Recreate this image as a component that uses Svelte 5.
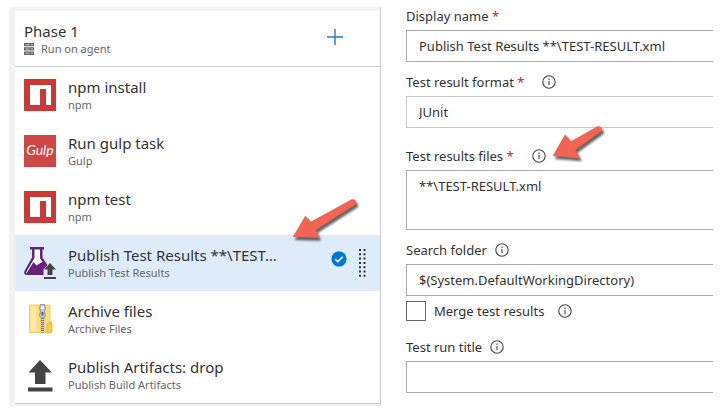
<script>
  let selected = $state(3);
  let displayName = $state('Publish Test Results **\\TEST-RESULT.xml');
  let format = $state('JUnit');
  let files = $state('**\\TEST-RESULT.xml');
  let folder = $state('$(System.DefaultWorkingDirectory)');
  let merge = $state(false);
  let runTitle = $state('');

  const tasks = [
    { icon: 'npm', title: 'npm install', kind: 'npm' },
    { icon: 'gulp', title: 'Run gulp task', kind: 'Gulp' },
    { icon: 'npm', title: 'npm test', kind: 'npm' },
    { icon: 'flask', title: 'Publish Test Results **\\TEST…', kind: 'Publish Test Results' },
    { icon: 'zip', title: 'Archive files', kind: 'Archive Files' },
    { icon: 'upload', title: 'Publish Artifacts: drop', kind: 'Publish Build Artifacts' }
  ];
</script>

{#snippet info()}
  <button class="info" type="button" aria-label="More information">
    <svg viewBox="0 0 14 14" width="14" height="14">
      <circle cx="7" cy="7" r="6.200" fill="none" stroke="#444" stroke-width="1.1" />
      <path d="M7 6v4.200M7 3.600v1.300" stroke="#444" stroke-width="1.100" />
    </svg>
  </button>
{/snippet}

{#snippet taskIcon(name)}
  {#if name === 'npm'}
    <svg viewBox="0 0 32 32" width="32" height="32" aria-hidden="true">
      <path fill="#cb3837" d="M0 0h32v32H0z" />
      <path fill="#fff" d="M6 6h21v20h-5V10h-6v16H6z" />
    </svg>
  {:else if name === 'gulp'}
    <span class="gulp" aria-hidden="true">Gulp</span>
  {:else if name === 'flask'}
    <svg viewBox="0 0 32 32" width="32" height="32" aria-hidden="true">
      <path fill="#68217a" d="M6 0h14v2.500h-1.500v8L28 25q1.500 3-2 3H3.500q-4.500 0-3-4L8 10.500v-8H6z" />
      <path fill="#fff" d="M10.500 2.500H16v8.500l2.500 4-3 1.500-3 2-3-3.500-6.500 10.500q-.5 1-1 .5.200-.8 1-2.300L10.500 11z" />
      <path fill="#deecf9" d="M19.500 22.500 26 15l7 7.500v11H19.500z" />
      <path fill="#444" d="m26 16 6 6.500h-3.500V28h-5v-5.500H20zM20 30h12v2H20z" />
    </svg>
  {:else if name === 'zip'}
    <svg viewBox="0 0 32 32" width="32" height="32" aria-hidden="true">
      <path fill="#fbdf7d" stroke="#e9c65a" stroke-width=".8" d="M5.500 2H26v27.500H5.500z" />
      <path fill="#ffeba6" d="M7 3.500h5v25H7z" />
      <path fill="#f5cd4e" stroke="#deb63c" stroke-width=".7" d="M23 29.500V21l3-2.500 2 1v10z" />
      <path fill="#e6d089" d="M16 2h5v27.500h-5z" />
      <path stroke="#777" stroke-width="3" stroke-dasharray="1 1" d="M18.500 13v16.500" />
      <path fill="#c4c7cc" stroke="#888" stroke-width=".8" d="M16.500 1.500h4l1 4-1 2.500 1 5-2 2h-2l-2-2 1-5-1-2.500z" />
      <path fill="#fff" d="M17.500 3h2v3h-2z" />
      <path fill="#666" d="M17.500 9h2v3.500h-2z" />
    </svg>
  {:else}
    <svg viewBox="0 0 32 32" width="32" height="32" aria-hidden="true">
      <path fill="#444" d="m16 1 12 12.500h-6.500V25H11V13.500H4.500zM4 28.500h24.500v4H4z" />
    </svg>
  {/if}
{/snippet}

<main class="editor">
  <section class="phases">
    <header class="phase">
      <div class="phase-text">
        <h1>Phase 1</h1>
        <p>
          <svg viewBox="0 0 10 12" width="10" height="12" aria-hidden="true">
            <path fill="#666" d="M0 0h10v3.300H0zM0 4.300h10v3.300H0zM0 8.600h10v3.300H0z" />
            <path stroke="#ddd" stroke-width=".8" d="M1.500 1.700h4M7 1.700h2M1.500 6h4M7 6h2M1.500 10.300h4M7 10.300h2" />
          </svg>
          Run on agent
        </p>
      </div>
      <button class="add" type="button" aria-label="Add task">
        <svg viewBox="0 0 16 16" width="16" height="16">
          <path d="M8 0v16M0 8h16" stroke="#2b78c6" stroke-width="1.400" />
        </svg>
      </button>
    </header>

    <ul class="tasks">
      {#each tasks as task, i}
        <li>
          <button class="task" class:selected={selected === i} type="button" onclick={() => (selected = i)}>
            {@render taskIcon(task.icon)}
            <span class="task-text">
              <span class="title">{task.title}</span>
              <span class="kind">{task.kind}</span>
            </span>
            {#if selected === i}
              <span class="tools">
                <svg viewBox="0 0 18 18" width="18" height="18" aria-hidden="true">
                  <circle cx="9" cy="9" r="8.500" fill="#fff" />
                  <circle cx="9" cy="9" r="7.700" fill="#0078d7" />
                  <path d="m5.300 9.200 2.500 2.500 4.900-5" fill="none" stroke="#fff" stroke-width="1.600" />
                </svg>
                <svg viewBox="0 0 8 30" width="8" height="30" aria-hidden="true">
                  <path d="M2 1v29M6.500 1v29" stroke="#333" stroke-width="2" stroke-dasharray="2 2.300" />
                </svg>
              </span>
            {/if}
          </button>
        </li>
      {/each}
    </ul>
  </section>

  <form class="details">
    <div class="field">
      <div class="label"><label for="name">Display name <b>*</b></label></div>
      <input id="name" type="text" bind:value={displayName} />
    </div>
    <div class="field">
      <div class="label wide"><label for="format">Test result format <b>*</b></label>{@render info()}</div>
      <select id="format" bind:value={format}>
        <option>JUnit</option>
        <option>NUnit</option>
        <option>VSTest</option>
        <option>XUnit</option>
      </select>
    </div>
    <div class="field spaced">
      <div class="label wide"><label for="files">Test results files <b>*</b></label>{@render info()}</div>
      <textarea id="files" bind:value={files}></textarea>
    </div>
    <div class="field">
      <div class="label"><label for="folder">Search folder</label>{@render info()}</div>
      <input id="folder" type="text" bind:value={folder} />
    </div>
    <div class="merge">
      <input id="merge" type="checkbox" bind:checked={merge} />
      <label for="merge">Merge test results</label>
      {@render info()}
    </div>
    <div class="field">
      <div class="label"><label for="title">Test run title</label>{@render info()}</div>
      <input id="title" type="text" bind:value={runTitle} />
    </div>
  </form>

  <svg class="arrow to-task" viewBox="0 0 72 48" width="72" height="48" aria-hidden="true">
    <path d="M2.700 39 15.300 17.700l5.400 6L61.700 1.200q4.500-.5 4.600 3.400-.1 1.500-1.600 2.500L25.700 32l3.300 7.700z" />
  </svg>
  <svg class="arrow to-field" viewBox="0 0 60 40" width="60" height="40" aria-hidden="true">
    <path d="M2.700 30 15 8.300l6 7L47.500.3q4-.5 4.600 3-.1 1.500-1.600 2.500L25.300 24l4.700 8.300z" />
  </svg>
</main>

<style>
  :global(body) {
    background: #fff;
  }

  .editor {
    position: relative;
    display: flex;
    align-items: stretch;
    gap: 25px;
    padding: 7px 9px 6px;
    font-family: "Noto Sans", "Open Sans", sans-serif;
    font-size: 13px;
    line-height: 20px;
    color: #333;
  }

  button {
    padding: 0;
    border: 0;
    background: none;
    font: inherit;
    color: inherit;
    text-align: left;
    cursor: pointer;
  }

  svg {
    display: block;
    flex: none;
    overflow: visible;
  }

  .phases {
    flex: 0 0 372px;
    box-sizing: border-box;
    padding: 4px 0 2px 6px;
    border-right: 1px solid #ccc;
    background: #f2f2f2;
  }

  .phase {
    display: flex;
    align-items: center;
    justify-content: space-between;
    box-sizing: border-box;
    height: 56px;
    padding: 0 37px 0 9px;
    border-bottom: 1px solid #ccc;
    background: #fff;
  }

  h1,
  p {
    margin: 0;
  }

  h1 {
    font-size: 15px;
    font-weight: 400;
    line-height: 20px;
  }

  p {
    display: flex;
    align-items: center;
    gap: 7px;
    font-size: 11px;
    line-height: 16px;
    color: #666;
  }

  .add {
    padding-bottom: 3px;
  }

  .tasks {
    margin: 0;
    padding: 0;
    list-style: none;
    border-bottom: 1px solid #ccc;
    background: #fff;
  }

  .task {
    display: flex;
    align-items: center;
    gap: 12px;
    box-sizing: border-box;
    width: 100%;
    height: 56px;
    padding: 0 14px 0 9px;
  }

  .selected {
    background: #deecf9;
  }

  .task-text {
    display: flex;
    flex: 1;
    flex-direction: column;
    min-width: 0;
  }

  .title {
    font-size: 15px;
    line-height: 20px;
    white-space: nowrap;
  }

  .kind {
    font-size: 11px;
    line-height: 16px;
    color: #666;
  }

  .tools {
    display: flex;
    align-items: flex-start;
    gap: 10px;
  }

  .tools svg:first-child {
    margin-top: 2px;
  }

  .gulp {
    flex: none;
    width: 32px;
    height: 32px;
    background: #cf4647;
    color: #fff;
    font-family: "Lato", sans-serif;
    font-size: 14px;
    font-style: italic;
    line-height: 30px;
    text-align: center;
  }

  .details {
    flex: 1;
    min-width: 0;
  }

  .field {
    display: flex;
    flex-direction: column;
    gap: 5px;
    margin-bottom: 11px;
  }

  .spaced {
    margin-top: 19px;
  }

  .label {
    display: flex;
    align-items: center;
    gap: 8px;
    height: 18px;
  }

  .wide {
    gap: 18px;
  }

  b {
    font-weight: 400;
    color: #c4262e;
  }

  input[type="text"],
  select,
  textarea {
    display: block;
    appearance: none;
    box-sizing: border-box;
    width: 100%;
    height: 32px;
    margin: 0;
    padding: 0 12px;
    border: 1px solid #aaa;
    border-right: 0;
    border-radius: 0;
    background: #fff;
    color: #333;
    font: inherit;
  }

  select {
    border-color: #c8c8c8;
  }

  textarea {
    height: 60px;
    padding-top: 5px;
    resize: none;
  }

  .merge {
    display: flex;
    align-items: center;
    margin: -6px 0 17px;
  }

  .merge input {
    appearance: none;
    box-sizing: border-box;
    width: 20px;
    height: 20px;
    margin: 0 8px 0 0;
    border: 1px solid #666;
    background: #fff;
  }

  .merge input:checked {
    background: #0078d7;
  }

  .merge label {
    margin-right: 14px;
  }

  .arrow {
    position: absolute;
    fill: #f26454;
    filter: drop-shadow(2px 3px 1px #0009);
    pointer-events: none;
  }

  .to-task {
    left: 290px;
    top: 198px;
  }

  .to-field {
    left: 550px;
    top: 126px;
  }
</style>
